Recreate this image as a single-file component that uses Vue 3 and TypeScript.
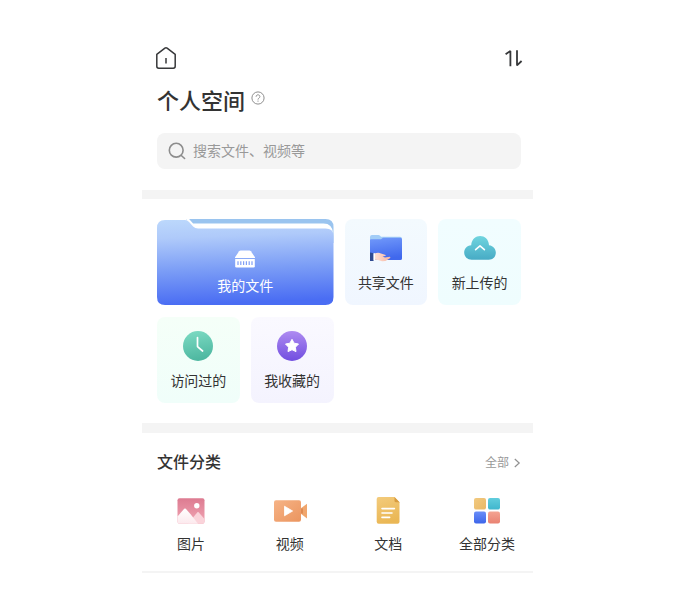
<script setup lang="ts">
import { ref } from 'vue'

interface Entry {
  id: string
  label: string
}

const keyword = ref('')

const shortcuts: Entry[] = [
  { id: 'shared', label: '共享文件' },
  { id: 'uploaded', label: '新上传的' },
  { id: 'visited', label: '访问过的' },
  { id: 'favorite', label: '我收藏的' },
]

const categories: Entry[] = [
  { id: 'image', label: '图片' },
  { id: 'video', label: '视频' },
  { id: 'document', label: '文档' },
  { id: 'all', label: '全部分类' },
]
</script>

<template>
  <main class="space">
    <header class="head">
      <nav class="topbar">
        <button class="plain" type="button" aria-label="首页">
          <svg width="22" height="24" viewBox="0 0 22 24" fill="none" stroke="#37383a" stroke-width="1.5" stroke-linejoin="round">
            <path d="M1.8 8.4 9.9 2.2Q11 1.4 12.1 2.2L20.2 8.4V20.3Q20.2 22.2 18.3 22.2H3.7Q1.8 22.2 1.8 20.3Z" />
            <path d="M11 12V17.6" />
          </svg>
        </button>
        <button class="plain" type="button" aria-label="排序">
          <svg width="20" height="24" viewBox="0 0 20 24" fill="none" stroke="#37383a" stroke-width="1.8" stroke-linejoin="bevel">
            <path d="M2.6 8.2 7.4 5V20.2" />
            <path d="M14 4.2V19.4L18.6 15" />
          </svg>
        </button>
      </nav>
      <div class="title-row">
        <h1>个人空间</h1>
        <button class="plain help" type="button" aria-label="帮助">
          <svg width="14" height="14" viewBox="0 0 14 14" fill="none" stroke="#8e8e8e" stroke-width="1">
            <circle cx="7" cy="7" r="6.1" />
            <path d="M5.1 5.7C5.1 3.2 8.9 3.2 8.9 5.6 8.9 7 7 7.1 7 8.6M7 9.6V10.7" />
          </svg>
        </button>
      </div>
      <label class="search">
        <svg width="18" height="18" viewBox="0 0 18 18" fill="none" stroke="#8d8d8d" stroke-width="1.6" stroke-linecap="round">
          <circle cx="8.2" cy="8.2" r="6.9" />
          <path d="M13.3 13.5 16.6 16.5" />
        </svg>
        <input v-model="keyword" type="search" placeholder="搜索文件、视频等" aria-label="搜索文件、视频等" />
      </label>
    </header>

    <section class="cards">
      <button class="card mine" type="button">
        <svg class="folder" viewBox="0 0 176 86" preserveAspectRatio="none">
          <defs>
            <linearGradient id="folder-front" x1="0" y1="0" x2="0.08" y2="1">
              <stop offset="0" stop-color="#bcd8fc" />
              <stop offset="0.22" stop-color="#afcafa" />
              <stop offset="0.6" stop-color="#7b9df6" />
              <stop offset="1" stop-color="#4a6df3" />
            </linearGradient>
          </defs>
          <path d="M29 0H168Q176 0 176 8V24H40Z" fill="#9ac4ef" />
          <path d="M29 0H32L36 4.4H166Q175 4.4 175.4 14V24H42Z" fill="#fff" />
          <path d="M8 1H28Q30 1 32 3L36 7.6Q38 9.6 41 9.6H168Q176 9.6 176 17V78Q176 86 168 86H8Q0 86 0 78V9Q0 1 8 1Z" fill="url(#folder-front)" />
        </svg>
        <svg class="mine-icon" width="22" height="20" viewBox="0 0 22 20">
          <path d="M6.7 1.5H15.3Q16.3 1.5 16.9 2.3L21 8.3V9H1V8.3L5.1 2.3Q5.7 1.5 6.7 1.5Z" fill="#fff" />
          <path d="M1.2 10H20.8V17.2Q20.8 18.5 19.5 18.5H2.5Q1.2 18.5 1.2 17.2Z" fill="#fff" />
          <path d="M4 12.2V16M6.8 12.2V16M9.6 12.2V16M12.4 12.2V16M15.2 12.2V16M18 12.2V16" stroke="#809ff5" stroke-width="1.2" />
        </svg>
        <span class="card-label">我的文件</span>
      </button>

      <button v-for="item in shortcuts" :key="item.id" class="card" :class="item.id" type="button">
        <svg v-if="item.id === 'shared'" width="34" height="34" viewBox="0 0 34 34">
          <defs>
            <linearGradient id="share-front" x1="0" y1="0" x2="0.2" y2="1">
              <stop offset="0" stop-color="#7199fa" />
              <stop offset="1" stop-color="#4068ed" />
            </linearGradient>
            <linearGradient id="share-hand" x1="0" y1="0" x2="1" y2="0">
              <stop offset="0" stop-color="#ffe2d6" />
              <stop offset="1" stop-color="#f5b6a3" />
            </linearGradient>
          </defs>
          <path d="M1 6Q1 4 3 4H9.5Q11 4 12 5.8H31Q33 5.8 33 8V13H1Z" fill="#a2cdf7" />
          <path d="M1 9.2Q1 8.2 2 8.2H12L14 6.8H31.4Q33 6.8 33 8.6V27.4Q33 29 31.4 29H1Z" fill="url(#share-front)" />
          <path d="M5 22.8Q9 21 12 22.4L16 23.7Q17.6 24.4 16 25L13.5 25.4 16 26.4 20.6 25.8Q22.2 26.2 20.5 27.4 17 30.4 13 30.2L9 29 5 28.8Z" fill="url(#share-hand)" />
          <path d="M1 21.5 4.8 22.2V30H1Z" fill="#304b91" />
          <path d="M4.4 22.3H6V29.4H4.4Z" fill="#fff" />
        </svg>

        <svg v-else-if="item.id === 'uploaded'" width="34" height="34" viewBox="0 0 34 34">
          <defs>
            <linearGradient id="cloud" x1="0" y1="0" x2="0" y2="1">
              <stop offset="0" stop-color="#70d5df" />
              <stop offset="1" stop-color="#47abc5" />
            </linearGradient>
          </defs>
          <path d="M8.7 28.7C-1.5 28.4-1 14.7 8.2 14.2 9 2 25.4 2 26 14.2 35.5 15.3 34.8 28.7 25.8 28.7Z" fill="url(#cloud)" />
          <path d="M12.6 18.7 17 14.8 21.4 18.7" fill="none" stroke="#fff" stroke-width="1.6" stroke-linecap="round" stroke-linejoin="round" />
        </svg>

        <svg v-else-if="item.id === 'visited'" width="34" height="34" viewBox="0 0 34 34">
          <defs>
            <linearGradient id="clock" x1="0" y1="0" x2="0.2" y2="1">
              <stop offset="0" stop-color="#7edcc4" />
              <stop offset="1" stop-color="#4fb8a1" />
            </linearGradient>
          </defs>
          <circle cx="17" cy="17" r="15" fill="url(#clock)" />
          <path d="M16.5 8.5V17.6L21.6 22" fill="none" stroke="#fff" stroke-width="1.7" stroke-linecap="round" stroke-linejoin="round" />
        </svg>

        <svg v-else width="34" height="34" viewBox="0 0 34 34">
          <defs>
            <linearGradient id="star" x1="0" y1="0" x2="0" y2="1">
              <stop offset="0" stop-color="#ae8bf1" />
              <stop offset="1" stop-color="#714ee0" />
            </linearGradient>
          </defs>
          <circle cx="17" cy="17" r="15" fill="url(#star)" />
          <path d="M17 10.3 19.1 14.2 23.5 15 20.4 18.2 21 22.6 17 20.7 13 22.6 13.6 18.2 10.5 15 14.9 14.2Z" fill="#fff" stroke="#fff" stroke-width="1" stroke-linejoin="round" />
        </svg>
        <span class="card-label">{{ item.label }}</span>
      </button>
    </section>

    <section class="kinds">
      <div class="kinds-head">
        <h2>文件分类</h2>
        <a href="#all">
          全部
          <svg width="8" height="12" viewBox="0 0 8 12" fill="none" stroke="#919191" stroke-width="1.2">
            <path d="M1.8 2 6.2 6 1.8 10" />
          </svg>
        </a>
      </div>
      <div class="kind-list">
        <button v-for="item in categories" :key="item.id" class="kind" type="button">
          <svg v-if="item.id === 'image'" width="36" height="32" viewBox="0 0 36 32">
            <defs>
              <linearGradient id="photo" x1="0" y1="0" x2="0" y2="1">
                <stop offset="0" stop-color="#dd7b91" />
                <stop offset="1" stop-color="#f1a6b4" />
              </linearGradient>
              <linearGradient id="hill" x1="0" y1="0" x2="0" y2="1">
                <stop offset="0" stop-color="#fff" />
                <stop offset="1" stop-color="#fce9ed" />
              </linearGradient>
            </defs>
            <rect x="4.5" y="3.3" width="27" height="25.4" rx="2" fill="url(#photo)" />
            <path d="M15 28.7 24.4 17.2Q25 16.6 25.6 17.2L31.5 24V26.7Q31.5 28.7 29.5 28.7Z" fill="#fad3da" />
            <path d="M4.5 21.4 11.2 13.8Q12 13 12.8 13.8L17.8 19.5 25 28.7H6.5Q4.5 28.7 4.5 26.7Z" fill="url(#hill)" />
            <circle cx="23.8" cy="10.8" r="2.7" fill="#fff" />
          </svg>

          <svg v-else-if="item.id === 'video'" width="36" height="32" viewBox="0 0 36 32">
            <defs>
              <linearGradient id="camera" x1="0" y1="0" x2="1" y2="1">
                <stop offset="0" stop-color="#f6b386" />
                <stop offset="1" stop-color="#eb955f" />
              </linearGradient>
            </defs>
            <path d="M29.2 13 35 8.7V23.5L29.2 19Z" fill="#f0a66d" />
            <rect x="28" y="13.4" width="3" height="5.2" fill="#de8a52" />
            <rect x="2" y="5.3" width="27" height="21.4" rx="2" fill="url(#camera)" />
            <path d="M12.5 11.2V20.8L20.6 16Z" fill="#fff" stroke="#fff" stroke-width="0.8" stroke-linejoin="round" />
          </svg>

          <svg v-else-if="item.id === 'document'" width="36" height="32" viewBox="0 0 36 32">
            <defs>
              <linearGradient id="paper" x1="0" y1="0" x2="0.3" y2="1">
                <stop offset="0" stop-color="#f3cb7c" />
                <stop offset="1" stop-color="#eab755" />
              </linearGradient>
            </defs>
            <path d="M8.7 2H24.5L29.5 7.3V26.8Q29.5 28.8 27.5 28.8H8.7Q6.7 28.8 6.7 26.8V4Q6.7 2 8.7 2Z" fill="url(#paper)" />
            <path d="M24.5 2 29.5 7.3H26Q24.5 7.3 24.5 5.8Z" fill="#d79c40" />
            <path d="M12 13.6H24.4M12 18H22M12 22.4H19.6" stroke="#fff" stroke-width="1.6" stroke-linecap="round" />
          </svg>

          <svg v-else width="36" height="32" viewBox="0 0 36 32">
            <defs>
              <linearGradient id="tile-yellow" x1="0" y1="0" x2="1" y2="1">
                <stop offset="0" stop-color="#f2ca80" />
                <stop offset="1" stop-color="#e9b867" />
              </linearGradient>
              <linearGradient id="tile-cyan" x1="0" y1="0" x2="0" y2="1">
                <stop offset="0" stop-color="#61cddd" />
                <stop offset="1" stop-color="#3fb6cd" />
              </linearGradient>
              <linearGradient id="tile-blue" x1="0" y1="0" x2="0" y2="1">
                <stop offset="0" stop-color="#698df8" />
                <stop offset="1" stop-color="#3e66ea" />
              </linearGradient>
              <linearGradient id="tile-red" x1="0" y1="0" x2="0" y2="1">
                <stop offset="0" stop-color="#f4a391" />
                <stop offset="1" stop-color="#e98272" />
              </linearGradient>
            </defs>
            <rect x="5" y="3" width="12" height="11.6" rx="2" fill="url(#tile-yellow)" />
            <rect x="19" y="3" width="12" height="11.6" rx="2" fill="url(#tile-cyan)" />
            <rect x="5" y="16.6" width="12" height="11.8" rx="2" fill="url(#tile-blue)" />
            <rect x="19" y="16.6" width="12" height="11.8" rx="2" fill="url(#tile-red)" />
          </svg>
          <span>{{ item.label }}</span>
        </button>
      </div>
    </section>
  </main>
</template>

<style>
body {
  margin: 0;
  background: #fff;
}
</style>

<style scoped>
.space {
  margin: 0 142px;
  color: #333;
  font-family: Roboto, "Noto Sans CJK SC", sans-serif;
  font-size: 14px;
}

button,
input {
  margin: 0;
  padding: 0;
  border: 0;
  background: none;
  color: inherit;
  font: inherit;
}

button {
  cursor: pointer;
}

svg {
  display: block;
  flex: none;
}

h1,
h2 {
  margin: 0;
  font-weight: 500;
}

.head {
  padding: 46px 12px 21px 15px;
}

.topbar {
  display: flex;
  justify-content: space-between;
  margin: 0 -2px;
}

.title-row {
  display: flex;
  gap: 6px;
  margin: 16px 0 15px;
}

h1 {
  font-size: 22px;
  line-height: 32px;
}

.help {
  align-self: flex-start;
  padding-top: 5px;
}

.search {
  display: flex;
  align-items: center;
  gap: 7px;
  height: 36px;
  padding: 0 11px;
  border-radius: 8px;
  background: #f4f4f4;
}

.search input {
  flex: 1;
  min-width: 0;
  line-height: 20px;
  outline: none;
  appearance: none;
}

.search input::placeholder {
  color: #999;
  opacity: 1;
}

.cards {
  display: grid;
  grid-template-columns: repeat(4, 1fr);
  grid-auto-rows: 86px;
  gap: 12px 11px;
  padding: 20px 12px 20px 15px;
  border-top: 9px solid #f4f4f4;
  border-bottom: 10px solid #f4f4f4;
}

.card {
  display: flex;
  flex-direction: column;
  align-items: center;
  gap: 8px;
  padding-top: 12px;
  border-radius: 8px;
}

.card-label {
  line-height: 20px;
}

.mine {
  position: relative;
  grid-column: span 2;
  gap: 7px;
  padding-top: 30px;
  color: #fff;
}

.folder {
  position: absolute;
  inset: 0;
  width: 100%;
  height: 100%;
}

.mine-icon,
.mine .card-label {
  position: relative;
}

.shared {
  background: linear-gradient(#f3fafe, #f0f6ff);
}

.uploaded {
  background: linear-gradient(#f1fdff, #effdfe);
}

.visited {
  background: linear-gradient(#f5fff8, #f0fefa);
}

.favorite {
  background: linear-gradient(#faf9ff, #f4f3fe);
}

.kinds {
  padding: 18px 12px 17px 15px;
  border-bottom: 2px solid #f4f4f4;
}

.kinds-head {
  display: flex;
  align-items: center;
  justify-content: space-between;
  margin-bottom: 20px;
}

h2 {
  font-size: 16px;
  line-height: 24px;
}

.kinds-head a {
  display: flex;
  align-items: center;
  gap: 4px;
  color: #999;
  font-size: 12px;
  line-height: 20px;
  text-decoration: none;
}

.kind-list {
  display: flex;
  justify-content: space-between;
}

.kind {
  display: flex;
  flex-direction: column;
  align-items: center;
  gap: 7px;
  width: 68px;
  line-height: 20px;
}
</style>
